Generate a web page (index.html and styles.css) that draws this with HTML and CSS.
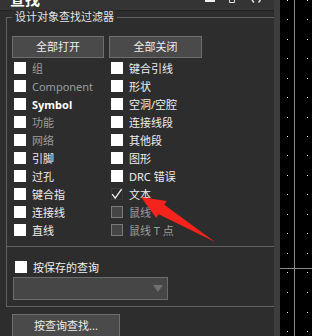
FILE: index.html
```html
<!DOCTYPE html>
<html lang="zh">
<head>
<meta charset="utf-8">
<title>查找</title>
<link rel="stylesheet" href="styles.css">
</head>
<body>
<div class="app">
  <div class="panel">
    <div class="header">
      <span class="title">查找</span>
      <svg class="tb-icons" width="60" height="10" viewBox="0 0 60 10">
        <rect x="2" y="0" width="10" height="2" fill="#f0f0f0"/>
        <path d="M26.5 0 V2.5 H31.5 V0" fill="none" stroke="#e0e0e0" stroke-width="1"/>
        <path d="M49 0 L51 2.5 M57.5 0 L55.5 2.5" stroke="#e8e8e8" stroke-width="1.4"/>
      </svg>
    </div>

    <div class="group filter">
      <div class="legend">设计对象查找过滤器</div>
      <div class="btn-row">
        <button class="btn btn-open">全部打开</button>
        <button class="btn btn-close">全部关闭</button>
      </div>
      <div class="grid">
        <div class="item dim"><span class="cb"></span>组</div>
        <div class="item dim"><span class="cb"></span>Component</div>
        <div class="item strong"><span class="cb"></span>Symbol</div>
        <div class="item dim"><span class="cb"></span>功能</div>
        <div class="item dim"><span class="cb"></span>网络</div>
        <div class="item"><span class="cb"></span>引脚</div>
        <div class="item"><span class="cb"></span>过孔</div>
        <div class="item"><span class="cb"></span>键合指</div>
        <div class="item"><span class="cb"></span>连接线</div>
        <div class="item"><span class="cb"></span>直线</div>

        <div class="item"><span class="cb"></span>键合引线</div>
        <div class="item"><span class="cb"></span>形状</div>
        <div class="item"><span class="cb"></span>空洞/空腔</div>
        <div class="item"><span class="cb"></span>连接线段</div>
        <div class="item"><span class="cb"></span>其他段</div>
        <div class="item"><span class="cb"></span>图形</div>
        <div class="item"><span class="cb"></span>DRC 错误</div>
        <div class="item"><span class="cb checked"><svg width="12" height="12" viewBox="0 0 12 12"><path d="M1.2 6.2 L4.2 10.2 L10.6 1.2" fill="none" stroke="#f2f2f2" stroke-width="1.3"/></svg></span>文本</div>
        <div class="item dim"><span class="cb off"></span>鼠线</div>
        <div class="item dim"><span class="cb off"></span>鼠线 T 点</div>
      </div>
    </div>

    <div class="group saved">
      <div class="item saved-item"><span class="cb"></span>按保存的查询</div>
      <div class="select"><span class="caret"></span></div>
    </div>

    <button class="btn btn-query">按查询查找...</button>
  </div>

  <div class="scroll"></div>

  <div class="canvas">
    <svg width="32" height="336" viewBox="0 0 32 336">
      <rect x="14" y="0" width="1" height="336" fill="#8a8a8a"/>
      <rect x="0" y="268" width="32" height="1" fill="#8a8a8a"/>
      <g fill="#ffffff">
        <rect x="7" y="0" width="1" height="1"/><rect x="27" y="0" width="1" height="1"/>
        <rect x="7" y="19" width="1" height="1"/><rect x="27" y="19" width="1" height="1"/>
        <rect x="7" y="39" width="1" height="1"/><rect x="27" y="39" width="1" height="1"/>
        <rect x="7" y="58" width="1" height="1"/><rect x="27" y="58" width="1" height="1"/>
        <rect x="7" y="78" width="1" height="1"/><rect x="27" y="78" width="1" height="1"/>
        <rect x="7" y="97" width="1" height="1"/><rect x="27" y="97" width="1" height="1"/>
        <rect x="7" y="117" width="1" height="1"/><rect x="27" y="117" width="1" height="1"/>
        <rect x="7" y="136" width="1" height="1"/><rect x="27" y="136" width="1" height="1"/>
        <rect x="7" y="155" width="1" height="1"/><rect x="27" y="155" width="1" height="1"/>
        <rect x="7" y="175" width="1" height="1"/><rect x="27" y="175" width="1" height="1"/>
        <rect x="7" y="194" width="1" height="1"/><rect x="27" y="194" width="1" height="1"/>
        <rect x="7" y="214" width="1" height="1"/><rect x="27" y="214" width="1" height="1"/>
        <rect x="7" y="233" width="1" height="1"/><rect x="27" y="233" width="1" height="1"/>
        <rect x="7" y="253" width="1" height="1"/><rect x="27" y="253" width="1" height="1"/>
        <rect x="7" y="272" width="1" height="1"/><rect x="27" y="272" width="1" height="1"/>
        <rect x="7" y="292" width="1" height="1"/><rect x="27" y="292" width="1" height="1"/>
        <rect x="7" y="312" width="1" height="1"/><rect x="27" y="312" width="1" height="1"/>
        <rect x="7" y="331" width="1" height="1"/><rect x="27" y="331" width="1" height="1"/>
      </g>
    </svg>
  </div>
</div>

<svg class="arrow" width="312" height="336" viewBox="0 0 312 336">
  <polygon points="141,197 166.7,201 164.4,204.8 215,242 158.6,214.2 156.3,218" fill="#f4231b"/>
</svg>
</body>
</html>
```

FILE: styles.css
```css
* {
  box-sizing: border-box;
}

html, body {
  margin: 0;
  padding: 0;
}

body {
  width: 312px;
  height: 336px;
  overflow: hidden;
  position: relative;
  background: #2d2d2d;
  color: #efefef;
  font-family: "Noto Sans", "Noto Sans CJK SC", sans-serif;
  font-size: 11px;
}

.app {
  display: flex;
  height: 336px;
}

.panel {
  width: 274px;
  flex: none;
  display: flex;
  flex-direction: column;
  background: #2d2d2d;
}

.header {
  height: 11px;
  flex: none;
  display: flex;
  align-items: flex-start;
  background: #343434;
  border-bottom: 1px solid #222222;
}

.title {
  margin: -9px 0 0 10px;
  font-size: 15px;
  line-height: 16px;
  font-weight: bold;
  color: #ffffff;
  font-family: "Noto Sans CJK SC", sans-serif;
}

.tb-icons {
  margin-left: auto;
  margin-right: 11px;
  display: block;
}

.group {
  border: 1px solid #626262;
  border-right: 0;
  margin-left: 6px;
}

.filter {
  margin-top: 6px;
  padding: 0 0 7px 0;
}

.legend {
  width: fit-content;
  margin: -8px 0 0 5px;
  padding: 0 3px;
  line-height: 14px;
  background: #2d2d2d;
  color: #e4e4e4;
}

.btn-row {
  display: flex;
  gap: 5px;
  margin: 12px 0 0 5px;
}

.btn {
  height: 22px;
  padding: 0;
  margin: 0;
  background: #4a4a4a;
  border: 1px solid #6e6e6e;
  color: #ececec;
  font-family: "Noto Sans", "Noto Sans CJK SC", sans-serif;
  font-size: 11px;
  line-height: 20px;
  text-align: center;
}

.btn-open {
  width: 92px;
}

.btn-close {
  width: 93px;
}

.grid {
  display: grid;
  grid-template-columns: 97px 1fr;
  grid-template-rows: repeat(10, 18px);
  grid-auto-flow: column;
  margin: 1px 0 0 7px;
}

.item {
  display: flex;
  align-items: center;
  height: 18px;
  white-space: nowrap;
  color: #efefef;
}

.item.dim {
  color: #9c9c9c;
}

.item.strong {
  font-weight: bold;
  color: #ffffff;
}

.cb {
  width: 12px;
  height: 12px;
  flex: none;
  margin-right: 6px;
  background: #ffffff;
}

.cb.checked {
  background: transparent;
  border: 1px solid #3a3a3a;
}

.cb.checked svg {
  display: block;
  margin: -1px 0 0 -1px;
}

.cb.off {
  background: #454545;
  border: 1px solid #7a7a7a;
}

.saved {
  border-top: 0;
  padding: 11px 0 6px 0;
}

.saved-item {
  margin-left: 8px;
}

.select {
  width: 155px;
  height: 23px;
  margin: 1px 0 0 6px;
  background: #464646;
  border: 1px solid #6c6c6c;
  display: flex;
  align-items: center;
  justify-content: flex-end;
  padding-right: 4px;
}

.caret {
  width: 0;
  height: 0;
  border-left: 5px solid transparent;
  border-right: 5px solid transparent;
  border-top: 7px solid #6f6f6f;
}

.btn-query {
  width: 108px;
  height: 24px;
  margin: 7px 0 0 12px;
  line-height: 22px;
}

.scroll {
  width: 6px;
  flex: none;
  background: #3d3d3d;
}

.canvas {
  width: 32px;
  flex: none;
  background: #000000;
}

.canvas svg {
  display: block;
}

.arrow {
  position: absolute;
  left: 0;
  top: 0;
  pointer-events: none;
}
```
